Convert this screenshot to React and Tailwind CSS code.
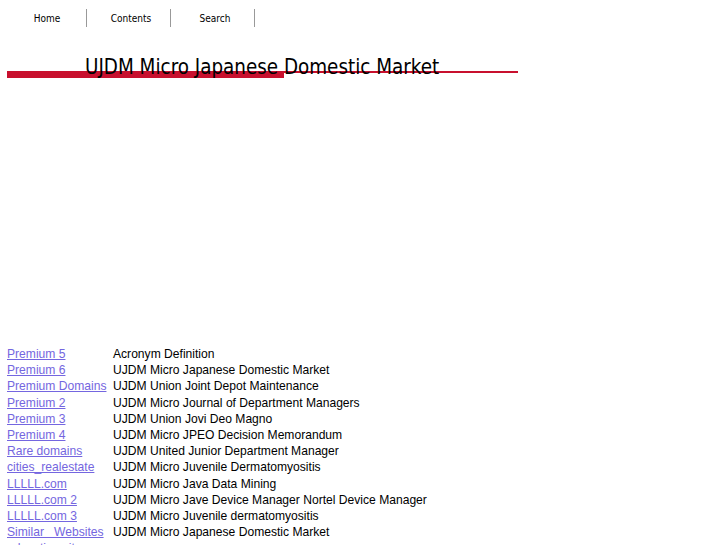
import React from "react";

const rows = [
  ["Premium 5", "Acronym Definition"],
  ["Premium 6", "UJDM Micro Japanese Domestic Market"],
  ["Premium Domains", "UJDM Union Joint Depot Maintenance"],
  ["Premium 2", "UJDM Micro Journal of Department Managers"],
  ["Premium 3", "UJDM Union Jovi Deo Magno"],
  ["Premium 4", "UJDM Micro JPEO Decision Memorandum"],
  ["Rare domains", "UJDM United Junior Department Manager"],
  ["cities_realestate", "UJDM Micro Juvenile Dermatomyositis"],
  ["LLLLL.com", "UJDM Micro Java Data Mining"],
  ["LLLLL.com 2", "UJDM Micro Jave Device Manager Nortel Device Manager"],
  ["LLLLL.com 3", "UJDM Micro Juvenile dermatomyositis"],
  ["Similar   Websites", "UJDM Micro Japanese Domestic Market"],
  ["education sites", ""],
];

export default function App() {
  return (
    <div className="bg-white h-[545px] overflow-hidden">
      <nav className="flex pl-[3px] pt-[9px] h-[28px]" style={{ fontFamily: '"DejaVu Sans Condensed", "DejaVu Sans", sans-serif' }}>
        {["Home", "Contents", "Search"].map((t) => (
          <div key={t} className="w-[84px] h-[18px] pl-[5px] border-r border-[#999] flex items-center justify-center text-[10px] text-black">
            {t}
          </div>
        ))}
      </nav>
      <div className="w-[518px] mt-[27px]">
        <h1
          className="relative z-10 pl-[85px] text-[20.4px] leading-[24px] text-black font-normal whitespace-nowrap"
          style={{ fontFamily: '"DejaVu Sans Condensed", "DejaVu Sans", sans-serif' }}
        >
          UJDM Micro Japanese Domestic Market
        </h1>
        <div className="flex items-start mt-[-8px] pl-[7px]">
          <div className="h-[7px] w-[277px] bg-[#c8102e]" />
          <div className="h-[2px] flex-1 bg-[#c8102e]" />
        </div>
      </div>
      <div className="h-[268px]" />
      <div className="pl-[7px] text-[12.1px] leading-[16.18px]" style={{ fontFamily: '"Liberation Sans", Arial, sans-serif' }}>
        {rows.map(([a, b], i) => (
          <div key={i} className="flex">
            <a href="#" className="w-[106px] shrink-0 text-[#7466e0] underline whitespace-pre">
              {a}
            </a>
            <span className="text-black whitespace-nowrap">{b}</span>
          </div>
        ))}
      </div>
    </div>
  );
}
